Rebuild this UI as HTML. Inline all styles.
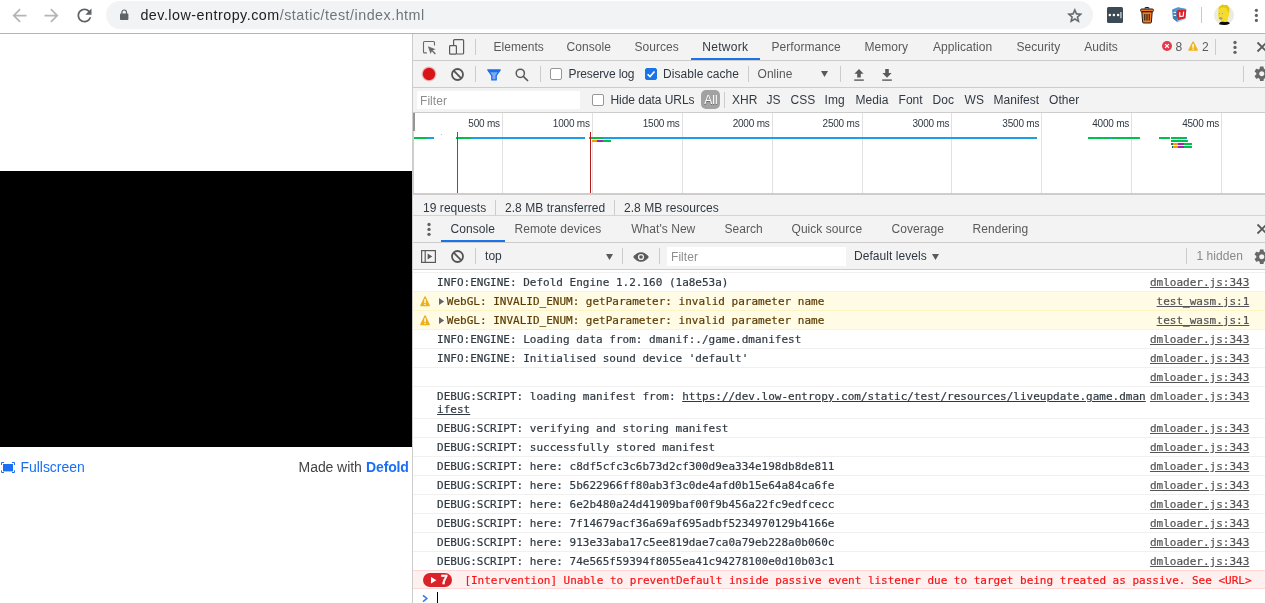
<!DOCTYPE html>
<html><head><meta charset="utf-8"><title>index</title>
<style>
*{box-sizing:border-box;margin:0;padding:0}
html,body{width:1265px;height:603px;overflow:hidden;background:#fff}
body{filter:opacity(1);position:relative;font-family:"Liberation Sans",sans-serif;font-size:12px;color:#333}
.a{position:absolute}
.t{position:absolute;white-space:nowrap;line-height:14px;font-size:12px;color:#303942;letter-spacing:.05px}
.g{color:#5a5a5a}
.m{position:absolute;white-space:nowrap;font-family:"DejaVu Sans Mono","Liberation Mono",monospace;font-size:11px;line-height:13px;color:#303942;-webkit-text-stroke:.2px}
.sep{position:absolute;width:1px;background:#ccc}
.hl{position:absolute;height:1px;background:#ccc}
.row{position:absolute;left:413px;width:852px;border-top:1px solid #f0f0f0}
.lnk{text-decoration:underline;color:#545454}
.cb{position:absolute;width:12px;height:12px;border:1px solid #979797;border-radius:2px;background:#fff}
svg{position:absolute;overflow:visible}
</style></head><body>

<div class="a" style="left:106px;top:1px;width:987px;height:28px;border-radius:14px;background:#f1f3f4"></div>
<div class="hl" style="left:0;top:33px;width:1265px;background:#b6b4b7"></div>
<svg style="left:8.9px;top:4.8px" width="21" height="21" viewBox="0 0 24 24"><path fill="#b3b6b9" d="M20 11H7.83l5.59-5.59L12 4l-8 8 8 8 1.41-1.41L7.83 13H20v-2z"/></svg>
<svg style="left:41.4px;top:4.8px" width="21" height="21" viewBox="0 0 24 24"><path fill="#b3b6b9" d="M12 4l-1.41 1.41L16.17 11H4v2h12.17l-5.58 5.59L12 20l8-8z"/></svg>
<svg style="left:73.5px;top:4.5px" width="21" height="21" viewBox="0 0 24 24"><path fill="#5f6368" d="M17.65 6.35C16.2 4.9 14.21 4 12 4c-4.42 0-7.99 3.58-7.99 8s3.57 8 7.99 8c3.73 0 6.84-2.55 7.73-6h-2.08c-.82 2.33-3.04 4-5.65 4-3.31 0-6-2.69-6-6s2.69-6 6-6c1.66 0 3.14.69 4.22 1.78L13 11h7V4l-2.35 2.35z"/></svg>
<svg style="left:120px;top:9px" width="8.4" height="11" viewBox="0 0 8.4 11"><rect x="0" y="4.6" width="8.4" height="6.4" rx="0.8" fill="#5f6368"/><path d="M1.9 5V3.3a2.3 2.3 0 0 1 4.6 0V5" fill="none" stroke="#5f6368" stroke-width="1.2"/></svg>
<div class="t" style="left:140.4px;top:6px;font-size:14.3px;line-height:18px;letter-spacing:0.5px;color:#202124">dev.low-entropy.com<span style="color:#70757a">/static/test/index.html</span></div>
<svg style="left:1066.2px;top:6.7px" width="17.6" height="17.6" viewBox="0 0 24 24"><path fill="#5f6368" stroke="#5f6368" stroke-width=".5" d="M22 9.24l-7.19-.62L12 2 9.19 8.63 2 9.24l5.46 4.73L5.82 21 12 17.27 18.18 21l-1.63-7.03L22 9.24zM12 15.4l-3.76 2.27 1-4.28-3.32-2.88 4.38-.38L12 6.1l1.71 4.04 4.38.38-3.32 2.88 1 4.28L12 15.4z"/></svg>
<div class="a" style="left:1107px;top:7px;width:16px;height:16px;border-radius:1.5px;background:#3c4a55"></div>
<svg style="left:1107px;top:7px" width="16" height="16" viewBox="0 0 16 16"><circle cx="2.8" cy="8.1" r="1.25" fill="#fff"/><circle cx="6.9" cy="8.1" r="1.25" fill="#fff"/><circle cx="11.1" cy="8.1" r="1.25" fill="#fff"/><rect x="13.2" y="5" width="1.4" height="6.3" fill="#c3c8cc"/></svg>
<svg style="left:1140px;top:6.5px" width="14" height="16.5" viewBox="0 0 14 16.5"><path d="M5 1.6 Q5 .6 6 .6 H8 Q9 .6 9 1.6" fill="none" stroke="#1a1a1a" stroke-width="1.2"/><rect x=".6" y="2" width="12.8" height="2.6" rx="1" fill="#f47b20" stroke="#1a1a1a" stroke-width="1"/><path d="M1.8 4.8 H12.2 L11.4 15 Q11.3 16 10.3 16 H3.7 Q2.7 16 2.6 15 Z" fill="#f47b20" stroke="#1a1a1a" stroke-width="1"/><path d="M4.8 7v6.6M7 7v6.6M9.2 7v6.6" stroke="#1a1a1a" stroke-width="1.1"/></svg>
<svg style="left:1171.6px;top:7px" width="15" height="16" viewBox="0 0 15 16"><path d="M.3 2.4L6 .3L14.4 1.9L13.6 11.8L5.6 15.2L.9 11.6Z" fill="#9dd3f2"/><path d="M.3 2.4L6 .3L14.4 1.9L5.2 4.3Z" fill="#4f97cf"/><path d="M.3 2.4L5.2 4.3L5.6 15.2L.9 11.6Z" fill="#3a7fb8"/><path d="M1.4 5.4H4M1.6 8.4H4.2" stroke="#e8f2fa" stroke-width="1.1"/><path d="M5.2 3.1L14.3 2.5L13.4 11.2L6 13.2L4.6 8.2Z" fill="#dc2127"/><path d="M7.7 5.3L7.9 9.6L11.3 9L11.6 4.6" fill="none" stroke="#fff" stroke-width="1.2"/></svg>
<div class="sep" style="left:1201px;top:7px;height:16px;background:#c8c9cb"></div>
<svg style="left:1214px;top:5.3px" width="20" height="20" viewBox="0 0 20 20"><defs><clipPath id="av"><circle cx="10" cy="10" r="10"/></clipPath></defs><circle cx="10" cy="10" r="10" fill="#ecebdf"/><path d="M5 19.2Q5.4 16.4 10.4 16.2Q15.2 16.4 15.8 18.4Q12.6 20.3 10 20Q7 20 5 19.2Z" fill="#0c0c0c"/><path d="M4.6 3.4L5.6 1.2L7.2 .6L8.4 -.4L10.4 .2L12.4 -.3L14 1L15.2 3.2L15.3 7.6Q15.4 10.6 14 12.8L13.2 16.4Q10.6 17.4 8.4 16.6L6.6 15.6Q4.8 15 4.4 13.2L4.6 11.6L3.7 10.9L4.5 8.6Q4 6 4.6 3.4Z" fill="#f7dc27"/><path d="M4.6 3.4L5.6 1.2L7.2 .6L8.4 -.4L10.4 .2L12.4 -.3L14 1L15.2 3.2L15.3 7.6L13.6 6.6L13 3.8L10.6 2.4L7 2.6L5.2 4.2Z" fill="#e3c51a"/><ellipse cx="5.6" cy="8.2" rx=".9" ry="1" fill="#cfcfbf"/><ellipse cx="8.7" cy="8.2" rx="1" ry="1" fill="#cfcfbf"/><circle cx="5.5" cy="8.3" r=".4" fill="#444"/><circle cx="8.6" cy="8.3" r=".4" fill="#444"/><path d="M5 12.6Q6.8 12 8.6 12.8L8.4 14.2Q6.6 14.8 5.2 14Z" fill="#9c9c84"/></svg>
<svg style="left:1254px;top:8px" width="5" height="15" viewBox="0 0 5 15"><circle cx="2.4" cy="2.3" r="1.6" fill="#5f6368"/><circle cx="2.4" cy="7.4" r="1.6" fill="#5f6368"/><circle cx="2.4" cy="12.4" r="1.6" fill="#5f6368"/></svg>
<div class="a" style="left:0;top:171px;width:412px;height:276px;background:#000"></div>
<svg style="left:1px;top:462px" width="14" height="11" viewBox="0 0 14 11"><rect x="2" y="2" width="10" height="7.4" fill="#1a6ff5"/><path d="M.5 3V.5H3M11 .5h2.5V3M13.5 8.4v2.1H11M3 10.5H.5V8.4" fill="none" stroke="#1a6ff5" stroke-width="1"/></svg>
<div class="t" style="left:20.5px;top:458px;font-size:14px;line-height:18px;letter-spacing:-0.04px;color:#1a6ff5">Fullscreen</div>
<div class="t" style="left:298.6px;top:458px;font-size:14px;line-height:18px;letter-spacing:-0.08px;color:#444">Made with</div>
<div class="t" style="left:366px;top:458px;font-size:14px;line-height:18px;letter-spacing:-0.13px;font-weight:700;color:#1a6ff5">Defold</div>
<div class="a" style="left:412px;top:34px;width:853px;height:569px;background:#f3f3f3;border-left:1px solid #ccc"></div>
<div class="t g" style="left:493.5px;top:40px;">Elements</div>
<div class="t g" style="left:566.5px;top:40px;">Console</div>
<div class="t g" style="left:634.5px;top:40px;">Sources</div>
<div class="t" style="left:702.2px;top:40px;letter-spacing:.3px">Network</div>
<div class="t g" style="left:771.5px;top:40px;">Performance</div>
<div class="t g" style="left:864.5px;top:40px;">Memory</div>
<div class="t g" style="left:933px;top:40px;">Application</div>
<div class="t g" style="left:1016.5px;top:40px;">Security</div>
<div class="t g" style="left:1084.2px;top:40px;">Audits</div>
<div class="a" style="left:691px;top:58px;width:69px;height:2px;background:#1a73e8"></div>
<div class="hl" style="left:413px;top:60px;width:852px"></div>
<svg style="left:423px;top:40.5px" width="14" height="14" viewBox="0 0 14 14"><path d="M11.5 4.6V1.5Q11.5 .5 10.5 .5H1.5Q.5 .5 .5 1.5V10.9Q.5 11.9 1.5 11.9H3.8" fill="none" stroke="#6a6a6a" stroke-width="1.1"/><path d="M4.9 5.2L12.6 8.2L9.7 9.3L12.9 12.4L11.9 13.4L8.8 10.2L7.6 13Z" fill="#6a6a6a"/></svg>
<svg style="left:449px;top:39px" width="16" height="16" viewBox="0 0 16 16"><path d="M4.6 6V1.6Q4.6 .6 5.6 .6H13.6Q14.6 .6 14.6 1.6V14Q14.6 15 13.6 15H8" fill="none" stroke="#5a5a5a" stroke-width="1.2"/><rect x=".6" y="6.6" width="6.8" height="8.6" rx=".8" fill="none" stroke="#5a5a5a" stroke-width="1.2"/></svg>
<div class="sep" style="left:475px;top:39px;height:16px"></div>
<svg style="left:1162px;top:41px" width="10" height="10" viewBox="0 0 10 10"><circle cx="5" cy="5" r="5" fill="#e6394a"/><path d="M3.1 3.1L6.9 6.9M6.9 3.1L3.1 6.9" stroke="#fff" stroke-width="1.3"/></svg>
<div class="t g" style="left:1175.5px;top:40px;">8</div>
<svg style="left:1188px;top:41px" width="10.2" height="10" viewBox="0 0 11 10" preserveAspectRatio="none"><path d="M5.5 .2Q5.9 .2 6.2 .7L10.7 8.7Q11 9.8 10 9.8H1Q0 9.8 .3 8.7L4.8 .7Q5.1 .2 5.5 .2Z" fill="#efb41e"/><rect x="4.7" y="3" width="1.6" height="3.7" rx=".5" fill="#fff"/><rect x="4.7" y="7.4" width="1.6" height="1.3" rx=".4" fill="#fff"/></svg>
<div class="t g" style="left:1202px;top:40px;">2</div>
<div class="sep" style="left:1215px;top:39px;height:16px"></div>
<svg style="left:1232.6px;top:40px" width="4" height="15" viewBox="0 0 4 15"><circle cx="2" cy="2.5" r="1.65" fill="#636363"/><circle cx="2" cy="7.4" r="1.65" fill="#636363"/><circle cx="2" cy="12.3" r="1.65" fill="#636363"/></svg>
<svg style="left:1257px;top:42px" width="10" height="10" viewBox="0 0 10 10"><path d="M.5 .5L9.5 9.5M9.5 .5L.5 9.5" stroke="#5a5a5a" stroke-width="1.8"/></svg>
<div class="a" style="left:421px;top:66px;width:16px;height:16px;border-radius:8px;background:radial-gradient(circle,#d8141a 0,#d8141a 5.6px,rgba(216,20,26,.3) 6.6px,rgba(216,20,26,0) 8px)"></div>
<svg style="left:451px;top:67.5px" width="13" height="13" viewBox="0 0 13 13"><circle cx="6.5" cy="6.5" r="5.5" fill="none" stroke="#555" stroke-width="1.8"/><path d="M2.7 2.7L10.3 10.3" stroke="#555" stroke-width="1.8"/></svg>
<div class="sep" style="left:475px;top:66px;height:16px"></div>
<svg style="left:487px;top:69px" width="14" height="12" viewBox="0 0 14 12"><path d="M.8 .9H13.2L9.2 6.6V10.9H4.8V6.6Z" fill="#7aaaf3" stroke="#1a6fe8" stroke-width="1.3" stroke-linejoin="round"/><path d="M.8 .9H13.2L11.6 3.2H2.4Z" fill="#1a6fe8"/></svg>
<svg style="left:515px;top:67.5px" width="14" height="14" viewBox="0 0 14 14"><circle cx="5.3" cy="5.3" r="4.1" fill="none" stroke="#5a5a5a" stroke-width="1.5"/><path d="M8.3 8.3L13 13" stroke="#5a5a5a" stroke-width="1.7"/></svg>
<div class="sep" style="left:540px;top:66px;height:16px"></div>
<div class="cb" style="left:550px;top:68px"></div>
<div class="t" style="left:568.5px;top:67px;letter-spacing:-0.12px">Preserve log</div>
<div class="cb" style="left:645px;top:68px;background:#1a73e8;border-color:#1a73e8"></div>
<svg style="left:645px;top:68px" width="12" height="12" viewBox="0 0 12 12"><path d="M2.6 6.2L5 8.6L9.5 3.4" fill="none" stroke="#fff" stroke-width="1.6"/></svg>
<div class="t" style="left:663px;top:67px;">Disable cache</div>
<div class="sep" style="left:748px;top:66px;height:16px"></div>
<div class="t g" style="left:757.5px;top:67px;">Online</div>
<svg style="left:821px;top:71px" width="7" height="6" viewBox="0 0 7 6"><path d="M0 0H7L3.5 6Z" fill="#5a5a5a"/></svg>
<div class="sep" style="left:840px;top:66px;height:16px"></div>
<svg style="left:854px;top:68.5px" width="10" height="12" viewBox="0 0 10 12"><path d="M5 0L9.6 4.8H6.8V8.6H3.2V4.8H.4Z" fill="#5a5a5a"/><rect x=".2" y="10.4" width="9.6" height="1.4" fill="#5a5a5a"/></svg>
<svg style="left:882px;top:68.5px" width="10" height="12" viewBox="0 0 10 12"><path d="M5 8.8L9.6 4H6.8V0H3.2V4H.4Z" fill="#5a5a5a"/><rect x=".2" y="10.4" width="9.6" height="1.4" fill="#5a5a5a"/></svg>
<div class="sep" style="left:1243px;top:66px;height:16px"></div>
<svg style="left:1253.2px;top:65.1px" width="17.5" height="17.5" viewBox="0 0 24 24"><path fill="#686868" d="M19.43 12.98c.04-.32.07-.64.07-.98s-.03-.66-.07-.98l2.11-1.65c.19-.15.24-.42.12-.64l-2-3.46c-.12-.22-.39-.3-.61-.22l-2.49 1c-.52-.4-1.08-.73-1.69-.98l-.38-2.65C14.46 2.18 14.25 2 14 2h-4c-.25 0-.46.18-.49.42l-.38 2.65c-.61.25-1.17.59-1.69.98l-2.49-1c-.23-.09-.49 0-.61.22l-2 3.46c-.13.22-.07.49.12.64l2.11 1.65c-.04.32-.07.65-.07.98s.03.66.07.98l-2.11 1.65c-.19.15-.24.42-.12.64l2 3.46c.12.22.39.3.61.22l2.49-1c.52.4 1.08.73 1.69.98l.38 2.65c.03.24.24.42.49.42h4c.25 0 .46-.18.49-.42l.38-2.65c.61-.25 1.17-.59 1.69-.98l2.49 1c.23.09.49 0 .61-.22l2-3.46c.12-.22.07-.49-.12-.64l-2.11-1.65zM12 15.5c-1.93 0-3.500-1.570-3.500-3.500s1.570-3.500 3.500-3.500 3.500 1.570 3.500 3.500-1.570 3.500-3.500 3.500z"/></svg>
<div class="hl" style="left:413px;top:87px;width:852px"></div>
<div class="a" style="left:417px;top:91px;width:163px;height:18px;background:#fff"></div>
<div class="t" style="left:420px;top:94px;color:#8e8e8e">Filter</div>
<div class="cb" style="left:592px;top:94px"></div>
<div class="t" style="left:610.5px;top:93px;letter-spacing:-0.05px">Hide data URLs</div>
<div class="a" style="left:701px;top:90px;width:19px;height:19px;border-radius:5px;background:#a2a2a2"></div>
<div class="t" style="left:704.2px;top:93px;color:#fff;text-shadow:0 1px 0 rgba(0,0,0,.35)">All</div>
<div class="sep" style="left:724px;top:92px;height:16px"></div>
<div class="t" style="left:732px;top:93px;">XHR</div>
<div class="t" style="left:766.5px;top:93px;">JS</div>
<div class="t" style="left:790.5px;top:93px;">CSS</div>
<div class="t" style="left:824.5px;top:93px;">Img</div>
<div class="t" style="left:855.5px;top:93px;">Media</div>
<div class="t" style="left:898.5px;top:93px;">Font</div>
<div class="t" style="left:932.5px;top:93px;">Doc</div>
<div class="t" style="left:964.5px;top:93px;">WS</div>
<div class="t" style="left:993.5px;top:93px;">Manifest</div>
<div class="t" style="left:1049px;top:93px;">Other</div>
<div class="hl" style="left:413px;top:112px;width:852px"></div>
<div class="a" style="left:413px;top:113px;width:852px;height:80px;background:#fff"></div>
<div class="a" style="left:413px;top:113px;width:1px;height:80px;background:#cfcfcf"></div>
<div class="a" style="left:413px;top:113px;width:2px;height:18px;background:#969696"></div>
<div class="sep" style="left:501.9px;top:113px;height:80px;background:#e1e1e1"></div>
<div class="t" style="left:439.4px;top:116.6px;width:60.5px;text-align:right;font-size:10px;line-height:13px;letter-spacing:-0.2px;color:#303942">500 ms</div>
<div class="sep" style="left:591.8px;top:113px;height:80px;background:#e1e1e1"></div>
<div class="t" style="left:529.3px;top:116.6px;width:60.5px;text-align:right;font-size:10px;line-height:13px;letter-spacing:-0.2px;color:#303942">1000 ms</div>
<div class="sep" style="left:681.7px;top:113px;height:80px;background:#e1e1e1"></div>
<div class="t" style="left:619.2px;top:116.6px;width:60.5px;text-align:right;font-size:10px;line-height:13px;letter-spacing:-0.2px;color:#303942">1500 ms</div>
<div class="sep" style="left:771.6px;top:113px;height:80px;background:#e1e1e1"></div>
<div class="t" style="left:709.1px;top:116.6px;width:60.5px;text-align:right;font-size:10px;line-height:13px;letter-spacing:-0.2px;color:#303942">2000 ms</div>
<div class="sep" style="left:861.5px;top:113px;height:80px;background:#e1e1e1"></div>
<div class="t" style="left:799.0px;top:116.6px;width:60.5px;text-align:right;font-size:10px;line-height:13px;letter-spacing:-0.2px;color:#303942">2500 ms</div>
<div class="sep" style="left:951.4px;top:113px;height:80px;background:#e1e1e1"></div>
<div class="t" style="left:888.9px;top:116.6px;width:60.5px;text-align:right;font-size:10px;line-height:13px;letter-spacing:-0.2px;color:#303942">3000 ms</div>
<div class="sep" style="left:1041.3px;top:113px;height:80px;background:#e1e1e1"></div>
<div class="t" style="left:978.8px;top:116.6px;width:60.5px;text-align:right;font-size:10px;line-height:13px;letter-spacing:-0.2px;color:#303942">3500 ms</div>
<div class="sep" style="left:1131.2px;top:113px;height:80px;background:#e1e1e1"></div>
<div class="t" style="left:1068.7px;top:116.6px;width:60.5px;text-align:right;font-size:10px;line-height:13px;letter-spacing:-0.2px;color:#303942">4000 ms</div>
<div class="sep" style="left:1221.1px;top:113px;height:80px;background:#e1e1e1"></div>
<div class="t" style="left:1158.6px;top:116.6px;width:60.5px;text-align:right;font-size:10px;line-height:13px;letter-spacing:-0.2px;color:#303942">4500 ms</div>
<div class="a" style="left:414px;top:137px;width:13px;height:2px;background:#00c04a"></div>
<div class="a" style="left:427px;top:137px;width:6.5px;height:2px;background:#1a9fe8"></div>
<div class="a" style="left:441px;top:134px;width:1px;height:1px;background:#bbb"></div>
<div class="a" style="left:456px;top:137px;width:15px;height:2px;background:#00c04a"></div>
<div class="a" style="left:471px;top:137px;width:114px;height:2px;background:#1a9fe8"></div>
<div class="a" style="left:589px;top:137px;width:14px;height:2px;background:#00c04a"></div>
<div class="a" style="left:603px;top:137px;width:434px;height:2px;background:#1a9fe8"></div>
<div class="a" style="left:592px;top:140px;width:5px;height:2px;background:#ff9800"></div>
<div class="a" style="left:597px;top:140px;width:6px;height:2px;background:#9c27b0"></div>
<div class="a" style="left:603px;top:140px;width:8px;height:2px;background:#00c04a"></div>
<div class="a" style="left:1088px;top:137px;width:52px;height:2px;background:#00c04a"></div>
<div class="a" style="left:1095px;top:137px;width:1px;height:2px;background:#1a9fe8"></div>
<div class="a" style="left:1103px;top:137px;width:1px;height:2px;background:#1a9fe8"></div>
<div class="a" style="left:1110px;top:137px;width:1px;height:2px;background:#1a9fe8"></div>
<div class="a" style="left:1124.5px;top:137px;width:1.0px;height:2px;background:#1a9fe8"></div>
<div class="a" style="left:1131px;top:137px;width:1px;height:2px;background:#1a9fe8"></div>
<div class="a" style="left:1139px;top:137px;width:1px;height:2px;background:#1a9fe8"></div>
<div class="a" style="left:1158.5px;top:137px;width:10.5px;height:2px;background:#00c04a"></div>
<div class="a" style="left:1169px;top:137px;width:1px;height:2px;background:#1a9fe8"></div>
<div class="a" style="left:1171px;top:137px;width:15px;height:2px;background:#00c04a"></div>
<div class="a" style="left:1178.5px;top:137px;width:1.0px;height:2px;background:#1a9fe8"></div>
<div class="a" style="left:1186px;top:137px;width:1px;height:2px;background:#1a9fe8"></div>
<div class="a" style="left:1171px;top:140px;width:15.5px;height:2px;background:#00c04a"></div>
<div class="a" style="left:1180.5px;top:140px;width:1.0px;height:2px;background:#1a9fe8"></div>
<div class="a" style="left:1186.5px;top:140px;width:1.0px;height:2px;background:#1a9fe8"></div>
<div class="a" style="left:1171px;top:143px;width:2px;height:2px;background:#2e7d32"></div>
<div class="a" style="left:1173px;top:143px;width:4.5px;height:2px;background:#ff9800"></div>
<div class="a" style="left:1177.5px;top:143px;width:6.5px;height:2px;background:#9c27b0"></div>
<div class="a" style="left:1184px;top:143px;width:7px;height:2px;background:#00c04a"></div>
<div class="a" style="left:1191px;top:143px;width:1px;height:2px;background:#1a9fe8"></div>
<div class="a" style="left:1171.5px;top:146px;width:1.5px;height:2px;background:#00695c"></div>
<div class="a" style="left:1173px;top:146px;width:4.5px;height:2px;background:#ff9800"></div>
<div class="a" style="left:1177.5px;top:146px;width:6.5px;height:2px;background:#9c27b0"></div>
<div class="a" style="left:1184px;top:146px;width:7px;height:2px;background:#00c04a"></div>
<div class="a" style="left:1191px;top:146px;width:1px;height:2px;background:#1a9fe8"></div>
<div class="sep" style="left:457px;top:132px;height:61px;background:#1f5fd6"></div>
<div class="sep" style="left:590px;top:132px;height:61px;background:#b71c1c"></div>
<div class="a" style="left:413px;top:193px;width:852px;height:2px;background:#cdcdcd"></div>
<div class="t" style="left:423px;top:201px;letter-spacing:0.05px">19 requests</div>
<div class="sep" style="left:495px;top:200px;height:15px"></div>
<div class="t" style="left:505px;top:201px;">2.8 MB transferred</div>
<div class="sep" style="left:614px;top:200px;height:15px"></div>
<div class="t" style="left:624px;top:201px;">2.8 MB resources</div>
<div class="hl" style="left:413px;top:215px;width:852px;background:#d4d4d4"></div>
<svg style="left:427.2px;top:221.8px" width="4" height="15" viewBox="0 0 4 15"><circle cx="2" cy="2.5" r="1.65" fill="#636363"/><circle cx="2" cy="7.4" r="1.65" fill="#636363"/><circle cx="2" cy="12.3" r="1.65" fill="#636363"/></svg>
<div class="t" style="left:450.5px;top:222px;">Console</div>
<div class="t g" style="left:514.5px;top:222px;">Remote devices</div>
<div class="t g" style="left:631.2px;top:222px;">What's New</div>
<div class="t g" style="left:724.5px;top:222px;">Search</div>
<div class="t g" style="left:791.5px;top:222px;">Quick source</div>
<div class="t g" style="left:891.5px;top:222px;">Coverage</div>
<div class="t g" style="left:972.5px;top:222px;">Rendering</div>
<div class="a" style="left:441px;top:240px;width:64px;height:2px;background:#1a73e8"></div>
<div class="hl" style="left:413px;top:242px;width:852px"></div>
<svg style="left:1257px;top:224px" width="10" height="10" viewBox="0 0 10 10"><path d="M.5 .5L9.5 9.5M9.5 .5L.5 9.5" stroke="#5a5a5a" stroke-width="1.8"/></svg>
<svg style="left:421px;top:250px" width="15" height="13" viewBox="0 0 15 13"><rect x=".6" y=".6" width="13.8" height="11.8" fill="none" stroke="#5a5a5a" stroke-width="1.2"/><path d="M4.2 .6V12.4" stroke="#5a5a5a" stroke-width="1.2"/><path d="M6.6 3.4L11.2 6.5L6.6 9.6Z" fill="#5a5a5a"/></svg>
<svg style="left:451px;top:250px" width="13" height="13" viewBox="0 0 13 13"><circle cx="6.5" cy="6.5" r="5.5" fill="none" stroke="#555" stroke-width="1.8"/><path d="M2.7 2.7L10.3 10.3" stroke="#555" stroke-width="1.8"/></svg>
<div class="sep" style="left:475px;top:248px;height:16px"></div>
<div class="t" style="left:485px;top:249px;">top</div>
<svg style="left:606px;top:253.5px" width="7" height="6" viewBox="0 0 7 6"><path d="M0 0H7L3.5 6Z" fill="#5a5a5a"/></svg>
<div class="sep" style="left:622px;top:248px;height:16px"></div>
<svg style="left:633px;top:251.5px" width="16" height="10" viewBox="0 0 16 10"><path d="M.2 5Q3.4 .2 8 .2Q12.6 .2 15.8 5Q12.6 9.8 8 9.8Q3.4 9.8 .2 5Z" fill="#5a5a5a"/><circle cx="8" cy="5" r="3.1" fill="#f3f3f3"/><circle cx="8" cy="5" r="1.8" fill="#5a5a5a"/></svg>
<div class="sep" style="left:659px;top:248px;height:16px"></div>
<div class="a" style="left:667px;top:247px;width:179px;height:19px;background:#fff"></div>
<div class="t" style="left:671px;top:250px;color:#8e8e8e">Filter</div>
<div class="t" style="left:854px;top:249px;">Default levels</div>
<svg style="left:931.5px;top:253.5px" width="7" height="6" viewBox="0 0 7 6"><path d="M0 0H7L3.5 6Z" fill="#5a5a5a"/></svg>
<div class="sep" style="left:1186px;top:248px;height:16px"></div>
<div class="t" style="left:1196.5px;top:249px;color:#8a8a8a">1 hidden</div>
<svg style="left:1253.2px;top:247.8px" width="17.5" height="17.5" viewBox="0 0 24 24"><path fill="#686868" d="M19.43 12.98c.04-.32.07-.64.07-.98s-.03-.66-.07-.98l2.11-1.65c.19-.15.24-.42.12-.64l-2-3.46c-.12-.22-.39-.3-.61-.22l-2.49 1c-.52-.4-1.08-.73-1.69-.98l-.38-2.65C14.46 2.18 14.25 2 14 2h-4c-.25 0-.46.18-.49.42l-.38 2.65c-.61.25-1.17.59-1.69.98l-2.49-1c-.23-.09-.49 0-.61.22l-2 3.46c-.13.22-.07.49.12.64l2.11 1.65c-.04.32-.07.65-.07.98s.03.66.07.98l-2.11 1.65c-.19.15-.24.42-.12.64l2 3.46c.12.22.39.3.61.22l2.49-1c.52.4 1.08.73 1.69.98l.38 2.65c.03.24.24.42.49.42h4c.25 0 .46-.18.49-.42l.38-2.65c.61-.25 1.17-.59 1.69-.98l2.49 1c.23.09.49 0 .61-.22l2-3.46c.12-.22.07-.49-.12-.64l-2.11-1.65zM12 15.5c-1.93 0-3.500-1.570-3.500-3.500s1.570-3.500 3.500-3.500 3.500 1.570 3.500 3.500-1.570 3.500-3.500 3.500z"/></svg>
<div class="hl" style="left:413px;top:269px;width:852px"></div>
<div class="a" style="left:413px;top:270px;width:852px;height:333px;background:#fff"></div>
<div class="row" style="top:272px;height:19px;">
<div class="m" style="left:24.1px;top:3px;">INFO:ENGINE: Defold Engine 1.2.160 (1a8e53a)</div>
<div class="m lnk" style="right:15.7px;top:3px">dmloader.js:343</div>
</div>
<div class="row" style="top:291px;height:20px;z-index:1;background:#fffbe5;border-top:1px solid #fff5c2;border-bottom:1px solid #fff5c2;"><svg style="left:7px;top:3.5px" width="10.1" height="10.4" viewBox="0 0 11 10" preserveAspectRatio="none"><path d="M5.5 .2Q5.9 .2 6.1 .6L10.7 8.8Q11 9.8 10 9.8H1Q0 9.8 .3 8.8L4.9 .6Q5.1 .2 5.5 .2Z" fill="#ebb01c"/><rect x="4.7" y="3" width="1.6" height="3.7" rx=".5" fill="#fff"/><rect x="4.7" y="7.4" width="1.6" height="1.3" rx=".4" fill="#fff"/></svg><svg style="left:26px;top:6.2px" width="5.2" height="7" viewBox="0 0 5 6" preserveAspectRatio="none"><path d="M0 0L5 3L0 6Z" fill="#63666e"/></svg>
<div class="m" style="left:33.8px;top:3px;color:#5c3c00;">WebGL: INVALID_ENUM: getParameter: invalid parameter name</div>
<div class="m lnk" style="right:15.7px;top:3px">test_wasm.js:1</div>
</div>
<div class="row" style="top:310px;height:20px;z-index:1;background:#fffbe5;border-top:1px solid #fff5c2;border-bottom:1px solid #fff5c2;"><svg style="left:7px;top:3.5px" width="10.1" height="10.4" viewBox="0 0 11 10" preserveAspectRatio="none"><path d="M5.5 .2Q5.9 .2 6.1 .6L10.7 8.8Q11 9.8 10 9.8H1Q0 9.8 .3 8.8L4.9 .6Q5.1 .2 5.5 .2Z" fill="#ebb01c"/><rect x="4.7" y="3" width="1.6" height="3.7" rx=".5" fill="#fff"/><rect x="4.7" y="7.4" width="1.6" height="1.3" rx=".4" fill="#fff"/></svg><svg style="left:26px;top:6.2px" width="5.2" height="7" viewBox="0 0 5 6" preserveAspectRatio="none"><path d="M0 0L5 3L0 6Z" fill="#63666e"/></svg>
<div class="m" style="left:33.8px;top:3px;color:#5c3c00;">WebGL: INVALID_ENUM: getParameter: invalid parameter name</div>
<div class="m lnk" style="right:15.7px;top:3px">test_wasm.js:1</div>
</div>
<div class="row" style="top:329px;height:19px;">
<div class="m" style="left:24.1px;top:3px;">INFO:ENGINE: Loading data from: dmanif:./game.dmanifest</div>
<div class="m lnk" style="right:15.7px;top:3px">dmloader.js:343</div>
</div>
<div class="row" style="top:348px;height:19px;">
<div class="m" style="left:24.1px;top:3px;">INFO:ENGINE: Initialised sound device 'default'</div>
<div class="m lnk" style="right:15.7px;top:3px">dmloader.js:343</div>
</div>
<div class="row" style="top:367px;height:19px;">
<div class="m" style="left:24.1px;top:3px;"></div>
<div class="m lnk" style="right:15.7px;top:3px">dmloader.js:343</div>
</div>
<div class="row" style="top:386px;height:32px;">
<div class="m" style="left:24.1px;top:3px;">DEBUG:SCRIPT: loading manifest from: <span class="lnk" style="color:#303942">https://dev.low-entropy.com/static/test/resources/liveupdate.game.dman<br>ifest</span></div>
<div class="m lnk" style="right:15.7px;top:3px">dmloader.js:343</div>
</div>
<div class="row" style="top:418px;height:19px;">
<div class="m" style="left:24.1px;top:3px;">DEBUG:SCRIPT: verifying and storing manifest</div>
<div class="m lnk" style="right:15.7px;top:3px">dmloader.js:343</div>
</div>
<div class="row" style="top:437px;height:19px;">
<div class="m" style="left:24.1px;top:3px;">DEBUG:SCRIPT: successfully stored manifest</div>
<div class="m lnk" style="right:15.7px;top:3px">dmloader.js:343</div>
</div>
<div class="row" style="top:456px;height:19px;">
<div class="m" style="left:24.1px;top:3px;">DEBUG:SCRIPT: here: c8df5cfc3c6b73d2cf300d9ea334e198db8de811</div>
<div class="m lnk" style="right:15.7px;top:3px">dmloader.js:343</div>
</div>
<div class="row" style="top:475px;height:19px;">
<div class="m" style="left:24.1px;top:3px;">DEBUG:SCRIPT: here: 5b622966ff80ab3f3c0de4afd0b15e64a84ca6fe</div>
<div class="m lnk" style="right:15.7px;top:3px">dmloader.js:343</div>
</div>
<div class="row" style="top:494px;height:19px;">
<div class="m" style="left:24.1px;top:3px;">DEBUG:SCRIPT: here: 6e2b480a24d41909baf00f9b456a22fc9edfcecc</div>
<div class="m lnk" style="right:15.7px;top:3px">dmloader.js:343</div>
</div>
<div class="row" style="top:513px;height:19px;">
<div class="m" style="left:24.1px;top:3px;">DEBUG:SCRIPT: here: 7f14679acf36a69af695adbf5234970129b4166e</div>
<div class="m lnk" style="right:15.7px;top:3px">dmloader.js:343</div>
</div>
<div class="row" style="top:532px;height:19px;">
<div class="m" style="left:24.1px;top:3px;">DEBUG:SCRIPT: here: 913e33aba17c5ee819dae7ca0a79eb228a0b060c</div>
<div class="m lnk" style="right:15.7px;top:3px">dmloader.js:343</div>
</div>
<div class="row" style="top:551px;height:19px;">
<div class="m" style="left:24.1px;top:3px;">DEBUG:SCRIPT: here: 74e565f59394f8055ea41c94278100e0d10b03c1</div>
<div class="m lnk" style="right:15.7px;top:3px">dmloader.js:343</div>
</div>
<div class="row" style="top:570px;height:19px;background:#fff0f0;border-top:1px solid #ffd6d6;border-bottom:1px solid #ffd6d6">
<div class="a" style="left:10px;top:2px;width:29px;height:14px;border-radius:7px;background:#d8232a"></div>
<svg style="left:18px;top:5.9px" width="5.4" height="6.6" viewBox="0 0 5 6" preserveAspectRatio="none"><path d="M0 0L5 3L0 6Z" fill="#fff"/></svg>
<div class="t" style="left:28px;top:2px;font-size:12px;font-weight:700;-webkit-text-stroke:.4px #fff;color:#fff">7</div>
<div class="m" style="left:51.4px;top:3px;letter-spacing:-.008px;color:#f81418">[Intervention] Unable to preventDefault inside passive event listener due to target being treated as passive. See &lt;URL&gt;</div>
</div>
<svg style="left:421.5px;top:595px" width="6" height="7" viewBox="0 0 6 7"><path d="M1 .4L4.8 3.5L1 6.6" fill="none" stroke="#3b78e7" stroke-width="1.6"/></svg>
<div class="a" style="left:437px;top:592px;width:1px;height:12px;background:#000"></div>
</body></html>
